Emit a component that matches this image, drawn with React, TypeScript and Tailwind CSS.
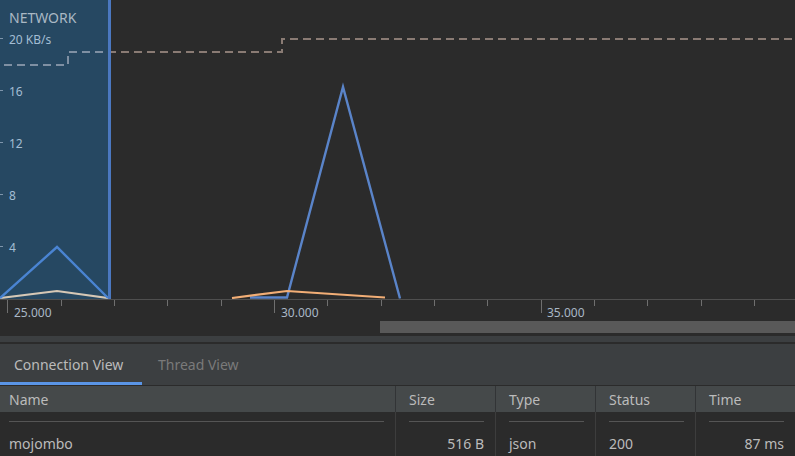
import React from "react";

const FONT = { fontFamily: '"Noto Sans", "Open Sans", sans-serif' };

function Chart() {
  return (
    <svg width={795} height={299} viewBox="0 0 795 299" className="block">
      <defs>
        <clipPath id="sel">
          <rect x={0} y={0} width={108} height={299} />
        </clipPath>
        <clipPath id="out">
          <rect x={111} y={0} width={700} height={299} />
        </clipPath>
      </defs>
      <rect x={0} y={0} width={795} height={299} fill="#2b2b2b" />
      <rect x={0} y={0} width={108} height={299} fill="#264862" />
      {[38, 90, 142, 194, 246].map((y) => (
        <line key={y} x1={0} x2={3} y1={y + 0.5} y2={y + 0.5} stroke="#7e95ab" strokeWidth={1} />
      ))}
      <path
        d="M4 65 H68 V52 H282 V39 H795"
        fill="none"
        stroke="#7f90a3"
        strokeWidth={2}
        strokeDasharray="8 5"
        clipPath="url(#sel)"
      />
      <path
        d="M4 65 H68 V52 H282 V39 H795"
        fill="none"
        stroke="#8a7b74"
        strokeWidth={2}
        strokeDasharray="8 5"
        clipPath="url(#out)"
      />
      <polyline points="0,298 57,291 108,298" fill="none" stroke="#d6c8b6" strokeWidth={2.2} />
      <polyline points="0,298 57,247 108,298" fill="none" stroke="#4a84d2" strokeWidth={2.4} />
      <polyline points="250,297.5 287,297.5 343,87 400,298.5" fill="none" stroke="#5a84c9" strokeWidth={2.4} />
      <polyline points="232,298 287,291 385,297.5" fill="none" stroke="#f2ae76" strokeWidth={2.2} />
      <rect x={108} y={0} width={3} height={299} fill="#4b78c0" />
    </svg>
  );
}

function Axis() {
  const ticks: { x: number; major: boolean }[] = [];
  for (let i = 0; i < 15; i++) {
    const x = 7.3 + i * 53.33;
    if (x > 795) break;
    ticks.push({ x: Math.round(x), major: i % 5 === 0 });
  }
  return (
    <svg width={795} height={22} viewBox="0 0 795 22" className="block">
      <line x1={0} x2={795} y1={0.5} y2={0.5} stroke="#4f4f4f" strokeWidth={1} />
      {ticks.map((t) => (
        <line
          key={t.x}
          x1={t.x + 0.5}
          x2={t.x + 0.5}
          y1={1}
          y2={t.major ? 14 : 7}
          stroke="#6f6f6f"
          strokeWidth={1}
        />
      ))}
    </svg>
  );
}

export default function App() {
  const labels = [
    { t: "20 KB/s", y: 38 },
    { t: "16", y: 90 },
    { t: "12", y: 142 },
    { t: "8", y: 194 },
    { t: "4", y: 246 },
  ];
  return (
    <div className="w-[795px] h-[456px] overflow-hidden bg-[#2b2b2b] flex flex-col" style={FONT}>
      <div className="relative h-[299px] shrink-0">
        <Chart />
        <div className="absolute left-[9px] top-[8px] text-[14px] leading-[20px] text-[#aab8c4]">NETWORK</div>
        {labels.map((l) => (
          <div
            key={l.t}
            className="absolute left-[9px] text-[12px] leading-[16px] text-[#a3bdd3]"
            style={{ top: l.y - 6 }}
          >
            {l.t}
          </div>
        ))}
      </div>
      <div className="relative h-[22px] shrink-0">
        <Axis />
        <div className="absolute left-[14px] top-[6px] text-[12px] leading-[16px] text-[#a9b7c6]">25.000</div>
        <div className="absolute left-[281px] top-[6px] text-[12px] leading-[16px] text-[#a9b7c6]">30.000</div>
        <div className="absolute left-[547px] top-[6px] text-[12px] leading-[16px] text-[#a9b7c6]">35.000</div>
      </div>
      <div className="h-[12px] shrink-0 flex">
        <div className="w-[380px]" />
        <div className="flex-1 bg-[#595959]" />
      </div>
      <div className="h-[3px] shrink-0" />
      <div className="h-[6px] shrink-0 bg-[#3c3f41]" />
      <div className="h-[2px] shrink-0 bg-[#2b2b2b]" />
      <div className="h-[41px] shrink-0 bg-[#3c3f41] flex items-stretch">
        <div className="w-[142px] flex flex-col">
          <div className="flex-1 flex items-center pl-[14px] pt-[3px] text-[14px] text-[#bbbbbb]">Connection View</div>
          <div className="h-[3px] bg-[#5a95e6]" />
        </div>
        <div className="flex items-center pl-[16px] text-[14px] text-[#7a7a7a]">Thread View</div>
      </div>
      <div className="h-[1px] shrink-0 bg-[#2b2b2b]" />
      <div className="h-[26px] shrink-0 bg-[#45494a] flex text-[14px] text-[#bbbbbb]">
        <div className="w-[395px] pl-[9px] flex items-center">Name</div>
        <div className="w-[1px] bg-[#323436]" />
        <div className="w-[99px] pl-[13px] flex items-center">Size</div>
        <div className="w-[1px] bg-[#323436]" />
        <div className="w-[99px] pl-[13px] flex items-center">Type</div>
        <div className="w-[1px] bg-[#323436]" />
        <div className="w-[99px] pl-[13px] flex items-center">Status</div>
        <div className="w-[1px] bg-[#323436]" />
        <div className="flex-1 pl-[13px] flex items-center">Time</div>
      </div>
      <div className="flex-1 min-h-0 overflow-hidden flex text-[14px] text-[#bbbbbb]">
        <div className="w-[395px] pl-[9px] pr-[11px] pt-[9px] flex flex-col">
          <div className="h-[1px] shrink-0 bg-[#555555]" />
          <div className="h-[42px] shrink-0 flex items-center">mojombo</div>
        </div>
        <div className="w-[1px] bg-[#3d3d3d]" />
        <div className="w-[99px] pl-[13px] pr-[11px] pt-[9px] flex flex-col">
          <div className="h-[1px] shrink-0 bg-[#555555]" />
          <div className="h-[42px] shrink-0 flex items-center justify-end">516 B</div>
        </div>
        <div className="w-[1px] bg-[#3d3d3d]" />
        <div className="w-[99px] pl-[13px] pr-[11px] pt-[9px] flex flex-col">
          <div className="h-[1px] shrink-0 bg-[#555555]" />
          <div className="h-[42px] shrink-0 flex items-center">json</div>
        </div>
        <div className="w-[1px] bg-[#3d3d3d]" />
        <div className="w-[99px] pl-[13px] pr-[11px] pt-[9px] flex flex-col">
          <div className="h-[1px] shrink-0 bg-[#555555]" />
          <div className="h-[42px] shrink-0 flex items-center">200</div>
        </div>
        <div className="w-[1px] bg-[#3d3d3d]" />
        <div className="flex-1 pl-[13px] pr-[11px] pt-[9px] flex flex-col">
          <div className="h-[1px] shrink-0 bg-[#555555]" />
          <div className="h-[42px] shrink-0 flex items-center justify-end">87 ms</div>
        </div>
      </div>
    </div>
  );
}
